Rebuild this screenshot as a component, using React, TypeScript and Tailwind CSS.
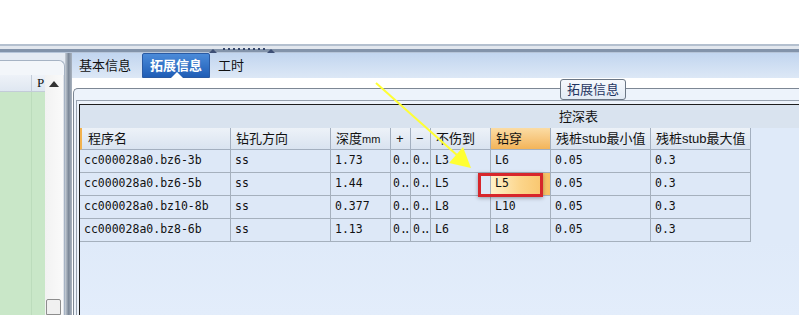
import React from "react";

const cols = [
  { title: "程序名", w: "w-[151px]" },
  { title: "钻孔方向", w: "w-[100px]" },
  { title: "深度mm", w: "w-[60px]" },
  { title: "+", w: "w-[20px]" },
  { title: "−", w: "w-[20px]" },
  { title: "不伤到", w: "w-[60px]" },
  { title: "钻穿", w: "w-[60px]" },
  { title: "残桩stub最小值", w: "w-[100px]" },
  { title: "残桩stub最大值", w: "w-[100px]" },
];

const rows = [
  ["cc000028a0.bz6-3b", "ss", "1.73", "0..", "0..", "L3", "L6", "0.05", "0.3"],
  ["cc000028a0.bz6-5b", "ss", "1.44", "0..", "0..", "L5", "L5", "0.05", "0.3"],
  ["cc000028a0.bz10-8b", "ss", "0.377", "0..", "0..", "L8", "L10", "0.05", "0.3"],
  ["cc000028a0.bz8-6b", "ss", "1.13", "0..", "0..", "L6", "L8", "0.05", "0.3"],
];

function HeaderCell({ i }: { i: number }) {
  const c = cols[i];
  let bg = "bg-gradient-to-b from-[#edf2f8] to-[#d9e3f0]";
  if (i === 6) bg = "bg-gradient-to-b from-[#fbdca4] to-[#f3b458]";
  return (
    <div
      className={`${c.w} ${bg} h-full shrink-0 flex items-center border-r border-b border-[#a3afbf] overflow-hidden whitespace-nowrap ${
        i === 0 ? "border-l-2 border-l-[#f2b24e] pl-[6px]" : "pl-[5px]"
      }`}
    >
      {c.title === "深度mm" ? (
        <span>
          深度<span className="text-[11px]">mm</span>
        </span>
      ) : (
        c.title
      )}
    </div>
  );
}

function DataCell({ i, v, hot }: { i: number; v: string; hot: boolean }) {
  const bg = hot ? "bg-gradient-to-r from-[#fff1c9] via-[#fcd58a] to-[#f8c163]" : "bg-[#dde8f7]";
  return (
    <div
      className={`${cols[i].w} ${bg} h-full shrink-0 flex items-center border-r border-b border-[#a5b0bd] overflow-hidden whitespace-nowrap ${
        i === 3 || i === 4 ? "pl-[2px]" : "pl-[4px]"
      }`}
    >
      {v === "0.." ? (
        <span>
          0<span className="tracking-[-3px]">..</span>
        </span>
      ) : (
        v
      )}
    </div>
  );
}

export default function App() {
  return (
    <div className="relative w-[799px] h-[315px] overflow-hidden bg-white font-['Liberation_Sans','Noto_Sans_CJK_SC',sans-serif] text-[#111]">
      <div className="h-[44px]" />

      {/* horizontal splitter */}
      <div className="relative h-[9px] flex flex-col">
        <div className="h-[2px] bg-[#b4c0cf]" />
        <div className="h-[3px] bg-[#e2e7ee]" />
        <div className="h-[3px] bg-[#8293aa]" />
        <div className="h-[1px] bg-[#b6c5d9]" />
        <div className="absolute left-[209px] top-[5px] w-0 h-0 border-l-[4px] border-r-[4px] border-b-[4px] border-l-transparent border-r-transparent border-b-[#3d4f75]" />
        <div className="absolute left-[267px] top-[5px] w-0 h-0 border-l-[4px] border-r-[4px] border-b-[4px] border-l-transparent border-r-transparent border-b-[#3d4f75]" />
        <div className="absolute left-[223px] top-[4px] flex gap-[3px]">
          {Array.from({ length: 9 }).map((_, k) => (
            <div key={k} className="w-[2px] h-[2px] bg-[#35466a]" />
          ))}
        </div>
      </div>

      <div className="flex h-[262px]">
        {/* left panel */}
        <div className="w-[65px] flex flex-col bg-[#e5ebf3]">
          <div className="h-[7px]" />
          <div className="flex-1 flex flex-col border-t border-r border-[#a6b3c4] rounded-tr-[6px] bg-[#f3f6fa] overflow-hidden">
            <div className="h-[14px]" />
            <div className="flex-1 flex">
              <div className="w-[45px] flex flex-col">
                <div className="h-[17px] flex bg-gradient-to-b from-[#eef2f8] to-[#dfe7f1] border-b border-[#c3ccd8] text-[13px] font-['Liberation_Serif',serif]">
                  <div className="w-[32px] border-r border-[#c3ccd8]" />
                  <div className="pl-[5px] leading-[16px]">P</div>
                </div>
                <div className="flex-1 flex bg-[#c9e7c8]">
                  <div className="w-[32px] border-r border-[#bcdcbc]" />
                </div>
              </div>
              <div className="w-[19px] flex flex-col bg-gradient-to-r from-[#f2f2f2] to-[#fafafa] border-r border-[#e0e4ea]">
                <div className="h-[17px] flex items-center justify-center">
                  <div className="w-0 h-0 border-l-[5px] border-r-[5px] border-b-[6px] border-l-transparent border-r-transparent border-b-[#333]" />
                </div>
                <div className="flex-1" />
                <div className="ml-[1px] w-[15px] h-[16px] border border-[#8d8d8d] bg-[#f0f0f0] rounded-t-[2px]" />
              </div>
            </div>
          </div>
        </div>

        {/* vertical splitter */}
        <div className="w-[7px] bg-gradient-to-r from-[#c9d0d8] via-[#7d8999] to-[#a9b3bf]" />

        {/* right panel */}
        <div className="flex-1 flex flex-col">
          <div className="h-[25px] flex items-stretch bg-gradient-to-b from-[#c1d5ef] to-[#dde8f6] text-[13px]">
            <div className="w-[70px] pl-[7px] flex items-center">基本信息</div>
            <div className="relative w-[68px] flex items-center justify-center bg-gradient-to-b from-[#4b8bd9] to-[#1f5db6] border border-[#2a5aa3] text-white font-bold rounded-t-[2px]">
              拓展信息
              <div className="absolute left-[28px] bottom-[-1px] w-0 h-0 border-l-[6px] border-r-[6px] border-b-[6px] border-l-transparent border-r-transparent border-b-white" />
            </div>
            <div className="pl-[8px] flex items-center">工时</div>
          </div>

          <div className="flex-1 flex flex-col bg-white pt-[10px]">
            <div className="relative flex-1 flex flex-col ml-[1px] border-t border-l border-[#7d8794] rounded-tl-[5px] bg-[#edf3fb] pt-[11px]">
              <div className="absolute left-[486px] top-[-10px] w-[66px] h-[21px] flex items-center justify-center border border-[#6c7785] rounded-[3px] bg-gradient-to-b from-[#f6f9fd] to-[#e3ebf5] text-[13px] text-[#1f3461]">
                拓展信息
              </div>
              <div className="flex-1 flex flex-col ml-[2px] border-t border-l border-[#98a2af] pt-[3px] pl-[2px]">
                <div className="flex-1 flex flex-col border-t border-l border-[#1e1e1e] bg-[#dfeaf9]">
                  <div className="h-[23px] flex items-center pl-[479px] bg-[#d9e3ef] text-[13px]">控深表</div>
                  <div className="h-[22px] flex text-[13px]">
                    {cols.map((_, i) => (
                      <HeaderCell key={i} i={i} />
                    ))}
                  </div>
                  {rows.map((r, ri) => (
                    <div key={ri} className="h-[23px] flex font-['DejaVu_Sans_Mono',monospace] text-[11.5px]">
                      {r.map((v, i) => (
                        <DataCell key={i} i={i} v={v} hot={ri === 1 && i === 6} />
                      ))}
                    </div>
                  ))}
                  <div className="flex-1 bg-gradient-to-b from-[#dfeaf9] to-[#e3edfb]" />
                </div>
              </div>
            </div>
          </div>
        </div>
      </div>

      {/* annotations */}
      <div className="absolute left-[478px] top-[173px] w-[65px] h-[24px] border-[3px] border-[#d7262b] shadow-[0_1px_4px_rgba(0,0,0,0.35)] pointer-events-none" />
      <svg className="absolute inset-0 pointer-events-none" width="799" height="315">
        <line x1="376" y1="83" x2="458" y2="156" stroke="#ffff33" strokeWidth="2" />
        <polygon points="471,168 449,163 463,147" fill="#ffff33" />
      </svg>
    </div>
  );
}
